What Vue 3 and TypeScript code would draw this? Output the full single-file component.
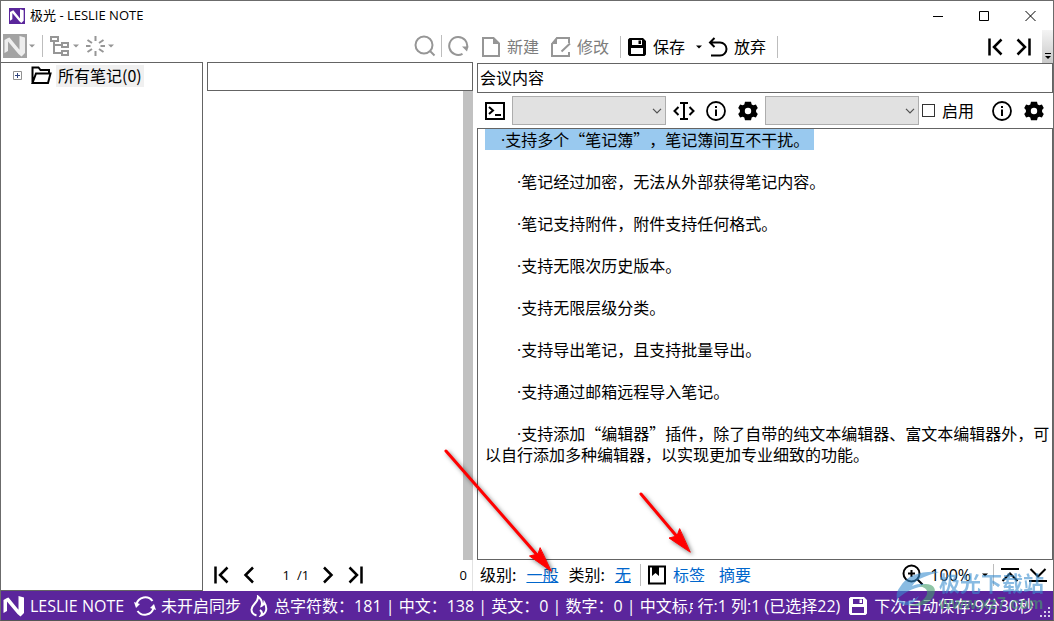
<script setup lang="ts">
import { ref } from 'vue'

interface Line {
  text: string
  selected?: boolean
}

const title = ref('会议内容')
const query = ref('')
const page = ref('1')
const enabled = ref(false)

const lines: Line[] = [
  { text: '支持多个“笔记簿”，笔记簿间互不干扰。', selected: true },
  { text: '笔记经过加密，无法从外部获得笔记内容。' },
  { text: '笔记支持附件，附件支持任何格式。' },
  { text: '支持无限次历史版本。' },
  { text: '支持无限层级分类。' },
  { text: '支持导出笔记，且支持批量导出。' },
  { text: '支持通过邮箱远程导入笔记。' },
  { text: '支持添加“编辑器”插件，除了自带的纯文本编辑器、富文本编辑器外，可以自行添加多种编辑器，以实现更加专业细致的功能。' },
]
</script>

<template>
  <svg class="defs" aria-hidden="true">
    <symbol id="i-n" viewBox="0 0 24 24">
      <path d="M1.500 6L5 4v13l-3.500 2zM5 4l1.500-.5L17.500 17l1 5.500L15.500 20 5 7.500zM16.500 2l5.500 1.500v15.500L18.500 22.500 16.500 17z" fill="currentColor" />
    </symbol>
    <symbol id="i-caret" viewBox="0 0 6 4"><path d="M0 0.500h6L3 3.500z" fill="currentColor" /></symbol>
    <symbol id="i-first" viewBox="0 0 16 20"><path d="M2.500 1.500v17M14.500 2.500L7 10l7.500 7.500" class="ln" /></symbol>
    <symbol id="i-last" viewBox="0 0 16 20"><path d="M13.500 1.500v17M1.500 2.500L9 10l-7.500 7.500" class="ln" /></symbol>
    <symbol id="i-prev" viewBox="0 0 12 20"><path d="M10 2.500L2.500 10l7.500 7.500" class="ln" /></symbol>
    <symbol id="i-next" viewBox="0 0 12 20"><path d="M2 2.500L9.500 10 2 17.500" class="ln" /></symbol>
    <symbol id="i-save" viewBox="0 0 20 20">
      <path fill-rule="evenodd" d="M2.500 1H16l3 3v13.500L17.500 19h-15L1 17.500v-15zM5 3v5h10V3zM4 11v6h12v-6z" fill="currentColor" />
      <path d="M11.500 3.500h2.500v3.500h-2.500z" fill="currentColor" />
    </symbol>
    <symbol id="i-info" viewBox="0 0 20 20">
      <circle cx="10" cy="10" r="9" fill="none" stroke="currentColor" stroke-width="1.800" />
      <path d="M9 5h2v2H9zM9 8.500h2V15H9z" fill="currentColor" />
    </symbol>
    <symbol id="i-gear" viewBox="0 0 20 20">
      <path fill-rule="evenodd" d="M7 .8h6l.7 2.600 1.600.9 2.600-.8 1.900 3.400-1.700 2v2.200l1.700 2-1.900 3.400-2.600-.8-1.600.9-.7 2.600H7l-.7-2.600-1.600-.9-2.600.8L.2 13.100l1.700-2V8.900l-1.700-2 1.900-3.400 2.600.8 1.600-.9zM10 6.800a3.200 3.200 0 1 0 0 6.400 3.200 3.200 0 0 0 0-6.400z" fill="currentColor" />
    </symbol>
    <symbol id="i-down" viewBox="0 0 10 6"><path d="M1 .8l4 4 4-4" fill="none" stroke="currentColor" stroke-width="1.200" /></symbol>
  </svg>

  <main class="window">
    <header class="titlebar">
      <span class="app-logo"><svg width="16" height="16"><use href="#i-n" /></svg></span>
      <h1>极光 - LESLIE NOTE</h1>
      <div class="sys">
        <button aria-label="最小化"><svg width="10" height="10"><path d="M0 5.500h10" class="thin" /></svg></button>
        <button aria-label="最大化"><svg width="10" height="10"><path d="M.5.5h9v9h-9z" class="thin" /></svg></button>
        <button aria-label="关闭"><svg width="11" height="10"><path d="M.5 0l10 10M10.500 0l-10 10" class="thin" /></svg></button>
      </div>
    </header>

    <div class="body">
      <section class="browse">
        <nav class="toolbar muted">
          <button class="n-box" aria-label="笔记簿"><svg width="24" height="24"><use href="#i-n" /></svg></button>
          <svg class="caret" width="6" height="4"><use href="#i-caret" /></svg>
          <i class="sep"></i>
          <button class="tree-btn" aria-label="分类">
            <svg width="20" height="20" viewBox="0 0 20 20" fill="none" stroke="currentColor" stroke-width="2">
              <path d="M1 1h7v4H1zM12 7h6v4h-6zM12 15h6v4h-6zM4 5v12h8M4 9h8" />
            </svg>
          </button>
          <svg class="caret" width="6" height="4"><use href="#i-caret" /></svg>
          <button class="spin-btn" aria-label="工具">
            <svg width="19" height="20" viewBox="0 0 19 20" fill="none" stroke="currentColor" stroke-width="2">
              <path d="M9.500 0v5M9.500 15v5M0 10h4.500M14.500 10H19M1.500 4l4.500 3M13 7l4.500-3M1.500 16L6 13M13 13l4.500 3" />
            </svg>
          </button>
          <svg class="caret" width="6" height="4"><use href="#i-caret" /></svg>
          <span class="grow"></span>
          <button aria-label="搜索">
            <svg width="22" height="22" viewBox="0 0 22 22" fill="none" stroke="currentColor" stroke-width="2">
              <circle cx="10" cy="10" r="8.500" /><path d="M16 16l4.500 4.500" />
            </svg>
          </button>
          <i class="sep"></i>
          <button aria-label="刷新">
            <svg width="22" height="22" viewBox="0 0 22 22">
              <path d="M15.500 18.800a9 9 0 1 1 4.500-6" fill="none" stroke="currentColor" stroke-width="2" />
              <path d="M15 11.500h6.500l-1.500 5z" fill="currentColor" />
            </svg>
          </button>
        </nav>
        <div class="panes">
          <aside class="tree">
            <button class="expand" aria-label="展开">
              <svg width="9" height="9"><path d="M.5.5h8v8h-8z" fill="#fff" stroke="#919191" /><path d="M2 4.500h5M4.500 2v5" stroke="#31457f" /></svg>
            </button>
            <svg width="21" height="19" viewBox="0 0 21 19" fill="none" stroke="#000" stroke-width="2">
              <path d="M1.500 16.500V1.500h6l2 2.500H18v3.500M1.500 17l3.500-9.500h14.500L17 17z" />
            </svg>
            <span class="node">所有笔记(0)</span>
          </aside>
          <div class="results">
            <input v-model="query" class="query" aria-label="搜索笔记" />
            <div class="list"><i class="track"></i></div>
            <nav class="pager">
              <button aria-label="首页"><svg width="16" height="20"><use href="#i-first" /></svg></button>
              <button class="p-prev" aria-label="上一页"><svg width="12" height="20"><use href="#i-prev" /></svg></button>
              <input v-model="page" class="page-no" aria-label="页码" /><span class="total">/1</span>
              <button class="p-next" aria-label="下一页"><svg width="12" height="20"><use href="#i-next" /></svg></button>
              <button aria-label="末页"><svg width="16" height="20"><use href="#i-last" /></svg></button>
              <span class="grow"></span>
              <span class="count">0</span>
            </nav>
          </div>
        </div>
      </section>

      <section class="editor">
        <nav class="toolbar main-tools">
          <button class="muted">
            <svg width="20" height="22" viewBox="0 0 20 22"><path d="M2 2h10.500L18 7.500V20H2z" fill="none" stroke="currentColor" stroke-width="2" /><path d="M12 2v6h6z" fill="currentColor" /></svg><span>新建</span>
          </button>
          <button class="muted edit-btn">
            <svg width="21" height="22" viewBox="0 0 21 22"><path d="M19 7V2H7L2 8v12h17v-4M11.500 15.500l8.500-8" fill="none" stroke="currentColor" stroke-width="2" /><path d="M7 1v7H1z" fill="currentColor" /></svg><span>修改</span>
          </button>
          <i class="sep"></i>
          <button class="save-btn"><svg width="20" height="20"><use href="#i-save" /></svg><span>保存</span></button>
          <svg class="caret" width="6" height="4"><use href="#i-caret" /></svg>
          <button>
            <svg width="20" height="20" viewBox="0 0 20 20" fill="none" stroke="currentColor" stroke-width="2"><path d="M6.500 1L2 5.500 6.500 10M2 5.500h10a6.500 6.500 0 0 1 0 13H3" /></svg><span>放弃</span>
          </button>
          <i class="sep"></i>
          <span class="grow"></span>
          <button aria-label="第一条"><svg width="16" height="20"><use href="#i-first" /></svg></button>
          <button class="tail" aria-label="最后一条"><svg width="16" height="20"><use href="#i-last" /></svg></button>
          <button class="overflow" aria-label="更多"><svg width="6" height="7"><path d="M0 .5h6" stroke="#000" /><path d="M0 3h6L3 6z" /></svg></button>
        </nav>
        <input v-model="title" class="note-title" aria-label="标题" />
        <div class="format">
          <button aria-label="控制台">
            <svg width="22" height="20" viewBox="0 0 22 20" fill="none" stroke="#000" stroke-width="2"><path d="M2 2h18v16H2zM5 6l4 3.500L5 13M11 14h6" /></svg>
          </button>
          <label class="combo"><select aria-label="插件"></select><svg width="10" height="6"><use href="#i-down" /></svg></label>
          <button aria-label="插入">
            <svg width="22" height="20" viewBox="0 0 22 20" fill="none" stroke="#000" stroke-width="2"><path d="M11 2v16M7 2h8M7 18h8M5.500 6L1.500 10l4 4M16.500 6l4 4-4 4" /></svg>
          </button>
          <button aria-label="信息"><svg width="20" height="20"><use href="#i-info" /></svg></button>
          <button class="gear" aria-label="设置"><svg width="20" height="20"><use href="#i-gear" /></svg></button>
          <label class="combo"><select aria-label="模板"></select><svg width="10" height="6"><use href="#i-down" /></svg></label>
          <label class="check"><input v-model="enabled" type="checkbox" /><span>启用</span></label>
          <span class="grow"></span>
          <button aria-label="模板信息"><svg width="20" height="20"><use href="#i-info" /></svg></button>
          <button class="gear" aria-label="模板设置"><svg width="20" height="20"><use href="#i-gear" /></svg></button>
        </div>
        <article class="content" contenteditable="true" spellcheck="false" role="textbox" aria-label="内容" aria-multiline="true">
          <p v-for="line in lines" :key="line.text" :class="{ selected: line.selected }"><span class="run"><span class="dot">·</span>{{ line.text }}</span></p>
        </article>
        <footer class="meta">
          <span>级别:</span><a class="under" href="#level">一般</a>
          <span>类别:</span><a class="under" href="#category">无</a>
          <i class="sep"></i>
          <svg width="20" height="20" viewBox="0 0 20 20"><path d="M2 1.500h16v17H2z" fill="none" stroke="#000" stroke-width="2" /><path d="M5 1h7v10L8.500 8 5 11z" /></svg>
          <a href="#tags">标签</a><a class="digest" href="#digest">摘要</a>
          <span class="grow"></span>
          <button class="zoom">
            <svg width="22" height="22" viewBox="0 0 22 22" fill="none" stroke="#000" stroke-width="2"><circle cx="9.500" cy="9.500" r="8" /><path d="M15.500 15.500l5 5M9.500 6v7M6 9.500h7" /></svg><span>100%</span>
          </button>
          <svg class="caret" width="6" height="4"><use href="#i-caret" /></svg>
          <i class="sep thin-sep"></i>
          <button aria-label="顶部"><svg width="18" height="16" viewBox="0 0 18 16" fill="none" stroke="#000" stroke-width="2"><path d="M0 2h18M1.500 14L9 6.500l7.500 7.500" /></svg></button>
          <button class="bottom" aria-label="底部"><svg width="18" height="16" viewBox="0 0 18 16" fill="none" stroke="#000" stroke-width="2"><path d="M0 14h18M1.500 2L9 9.500 16.500 2" /></svg></button>
        </footer>
      </section>
    </div>

    <footer class="status">
      <svg width="24" height="24"><use href="#i-n" /></svg>
      <span class="brand">LESLIE NOTE</span>
      <svg class="sync" width="22" height="22" viewBox="0 0 22 22">
        <path d="M2.500 9a9 9 0 0 1 16-3M19.500 13a9 9 0 0 1-16 3" fill="none" stroke="currentColor" stroke-width="2" />
        <path d="M0 7l2 6 4-4zM22 15l-2-6-4 4z" fill="currentColor" />
      </svg>
      <span class="sync-text">未开启同步</span>
      <svg class="flame" width="18" height="22" viewBox="0 0 18 22" fill="none" stroke="currentColor" stroke-width="2">
        <path d="M6.500 20.500C3 19.500 1.500 17 1.500 14.500 1.500 9 8.500 8 8 1.500c4 3 4.500 6.500 3.500 9.500 1.500-.5 2.500-1.500 2.800-3.500 3.200 5 2.700 11-3.300 13 1.500-2 1-4-1-5.500" />
      </svg>
      <span class="stats">总字符数：181 | 中文：138 | 英文：0 | 数字：0 | 中文标点</span>
      <span class="cursor">行:1 列:1 (已选择22)</span>
      <svg class="disk" width="20" height="20"><use href="#i-save" /></svg>
      <span>下次自动保存:9分30秒</span>
      <svg class="grip" width="11" height="11" fill="#d9cdec"><path d="M8 0h2v2H8zM4 4h2v2H4zM8 4h2v2H8zM0 8h2v2H0zM4 8h2v2H4zM8 8h2v2H8z" /></svg>
    </footer>

    <svg class="arrows" width="1054" height="621" aria-hidden="true">
      <g fill="#f00" stroke="#f00" stroke-linecap="round">
        <path d="M446 451l92 105" stroke-width="3" /><path d="M551 571l-21.500-15 8.500-2 2-6z" />
        <path d="M641 494l38 45" stroke-width="3" /><path d="M690 552l-21-14 8-2 2.500-7z" />
      </g>
    </svg>
    <div class="mark" aria-hidden="true">
      <svg width="48" height="42" viewBox="0 0 48 42">
        <path d="M5 17C12 5 26 1 44 2 34 5 22 8 17 16c8-3 14-3 18 1-9-2-20 1-33 12C1 24 2 21 5 17z" fill="#3b8fd0" />
        <path d="M30 14c10 0 12 6 8 13-5 8-16 11-26 8 11 0 18-5 20-11 1-5-3-7-8-8z" fill="#45a06c" />
        <path d="M2 28c5 5 14 5 22-2-4 7-10 10-15 9-4-1-6-4-7-7z" fill="#3b8fd0" />
      </svg>
      <div><b>极光下载站</b><small>www.xz7.com</small></div>
    </div>
  </main>
</template>

<style>
html, body, #app { height: 100%; }
body { margin: 0; background: #fff; }
</style>

<style scoped>
* { box-sizing: border-box; }
.window {
  position: relative; display: flex; flex-direction: column; height: 100%; min-height: 400px; overflow: hidden;
  border: 1px solid #6b6b6b; border-bottom-color: #555; background: #fff; color: #000;
  font: 16px/22px "Noto Sans CJK SC", sans-serif; text-spacing-trim: space-all;
}
.defs { position: absolute; width: 0; height: 0; }
.ln { fill: none; stroke: currentColor; stroke-width: 2.500; }
.thin { fill: none; stroke: #000; stroke-width: 1; }
svg { flex: none; display: block; }
button, input, select { font: inherit; color: inherit; margin: 0; padding: 0; border: 0; background: none; border-radius: 0; outline: 0; }
button { display: flex; align-items: center; flex: none; }
span, a { white-space: nowrap; }
.grow { flex: 1; }
.sep { flex: none; width: 1px; height: 22px; background: #bdbdbd; }
.muted { color: #969696; }
.muted span { color: #7d7d7d; }

.titlebar { display: flex; align-items: center; flex: none; height: 29px; padding-left: 8px; }
.app-logo { background: #5a269b; color: #fff; }
h1 { flex: 1; margin: 0 0 0 5px; padding-bottom: 2px; font: 13px/20px "Open Sans", "Noto Sans CJK SC", sans-serif; }
.sys { display: flex; }
.sys button { width: 46px; height: 28px; justify-content: center; }

.body { flex: 1; min-height: 0; display: grid; grid-template-columns: minmax(0, 472fr) minmax(0, 576fr); gap: 4px; }
.browse, .editor, .results { display: flex; flex-direction: column; min-width: 0; min-height: 0; }
.toolbar { display: flex; align-items: center; flex: none; height: 32px; }
.browse .toolbar { padding: 0 4px 0 2px; gap: 5px; }
.n-box { background: #a3a3a3; color: #eee; }
.browse .n-box + .caret { margin: 0 2px 0 -3px; }
.tree-btn { margin-left: 2px; }
.spin-btn { margin-left: 2px; }
.browse .caret { margin-left: -2px; }
.panes { flex: 1; min-height: 0; display: grid; grid-template-columns: minmax(0, 202fr) minmax(0, 266fr); gap: 4px; }
.tree { display: flex; align-items: flex-start; padding: 2px 0 0 12px; border: 1px solid #646464; border-left: 0; }
.expand { margin: 6px 9px 0 0; }
.tree > svg { margin: 1px 4px 0 0; }
.node { height: 22px; padding: 0 2px; background: #f0f0f0; line-height: 20px; }
.query { width: 100%; height: 29px; flex: none; padding: 0 4px; border: 1px solid #646464; }
.list { flex: 1; display: flex; justify-content: flex-end; }
.track { width: 10px; background: #c1c1c1; }
.pager { display: flex; align-items: center; flex: none; height: 31px; padding: 0 5px 2px 6px; font: 13px/20px "Open Sans", sans-serif; border-right: 1px solid #e2e2e2; }
.p-prev { margin-left: 14px; }
.page-no { width: 40px; text-align: right; padding-right: 5px; }
.total { width: 27px; padding-left: 2px; }
.p-next { margin-right: 14px; }

.main-tools { height: 33px; padding-left: 4px; }
.main-tools button svg { margin-right: 6px; }
.main-tools button span, .check span, .meta > span, .meta a { padding-bottom: 2px; }
.edit-btn { margin-left: 11px; }
.main-tools .sep { margin: 0 6px 0 11px; }
.main-tools .caret { margin: 0 6px 0 11px; }
.main-tools .tail { margin: 0 10px 0 7px; }
.main-tools .tail svg, .main-tools .overflow svg { margin-right: 0; }
.overflow { align-self: stretch; width: 11px; align-items: flex-end; justify-content: center; padding-bottom: 3px; background: linear-gradient(#f4f4f4, #c9c9c9); }
.note-title { flex: none; width: 100%; height: 30px; padding: 0 2px 2px; border: 1px solid #646464; }
.format { display: flex; align-items: center; flex: none; height: 35px; padding: 0 9px 0 7px; gap: 6px; }
.format button + button { margin-left: 5px; }
.format button + .gear { margin-left: 6px; }
.format .gear + .combo { margin-left: 1px; }
.format .combo + button { margin-left: 1px; }
.format .combo + .check { margin-left: -3px; }
.combo { display: grid; flex: 0 1 154px; min-width: 60px; align-items: center; }
.combo select { grid-area: 1 / 1; width: 100%; height: 29px; appearance: none; background: #e1e1e1; border: 1px solid #adadad; }
.combo svg { grid-area: 1 / 1; justify-self: end; margin-right: 4px; color: #505050; pointer-events: none; }
.check { display: flex; align-items: center; gap: 7px; white-space: nowrap; }
.check input { appearance: none; width: 13px; height: 13px; border: 1px solid #333; background: #fff; }
.check input:checked { background: #333; }
.content { flex: 1; min-height: 0; overflow: hidden; padding: 0 2px 0 7px; border: 1px solid #646464; line-height: 21px; outline: 0; }
.content p { margin: 0 0 21px; text-indent: 32px; }
.content p.selected { display: flex; text-indent: 0; }
.content .run { white-space: normal; }
.selected .run { padding: 0 5px 0 16px; background: #99c9ef; }
.dot { font-family: "Open Sans", sans-serif; line-height: 0; }
.meta { display: flex; align-items: center; flex: none; height: 31px; padding: 0 6px 1px 3px; }
.meta a { color: #0066cc; text-decoration: none; margin: 0 10px; }
.meta a.under { text-decoration: underline; }
.meta .sep { margin: 0 6px 0 -1px; }
.meta svg + a { margin: 0 4px 0 6px; }
.zoom { gap: 6px; }
.zoom span { font-family: "Open Sans", sans-serif; }
.meta .caret { margin-left: 11px; }
.meta .thin-sep { margin: 0 7px 0 5px; }
.bottom { margin-left: 10px; }

.status { display: flex; align-items: center; flex: none; height: 29px; padding: 0 2px 0 1px; background: #5b259c; color: #fff; font-family: "Open Sans", "Noto Sans CJK SC", sans-serif; }
.brand { margin: 0 10px 0 4px; }
.sync-text { margin: 0 9px 0 5px; }
.flame { margin-right: 6px; }
.stats { flex: 1; min-width: 0; overflow: hidden; }
.cursor { margin: 0 8px 0 5px; }
.disk { margin-right: 6px; }
.grip { align-self: flex-end; margin: 0 0 2px 6px; }

.arrows { position: absolute; left: -1px; top: -1px; pointer-events: none; filter: drop-shadow(2px 2px 2px rgba(0, 0, 0, 0.5)); }
.mark { position: absolute; right: 9px; bottom: 6px; display: flex; opacity: 0.6; pointer-events: none; }
.mark div { display: flex; flex-direction: column; margin-left: -4px; }
.mark b { font-size: 21px; line-height: 24px; color: #3b8fd0; }
.mark small { font: bold 16px/20px "Liberation Sans", sans-serif; color: #45a06c; }
</style>
